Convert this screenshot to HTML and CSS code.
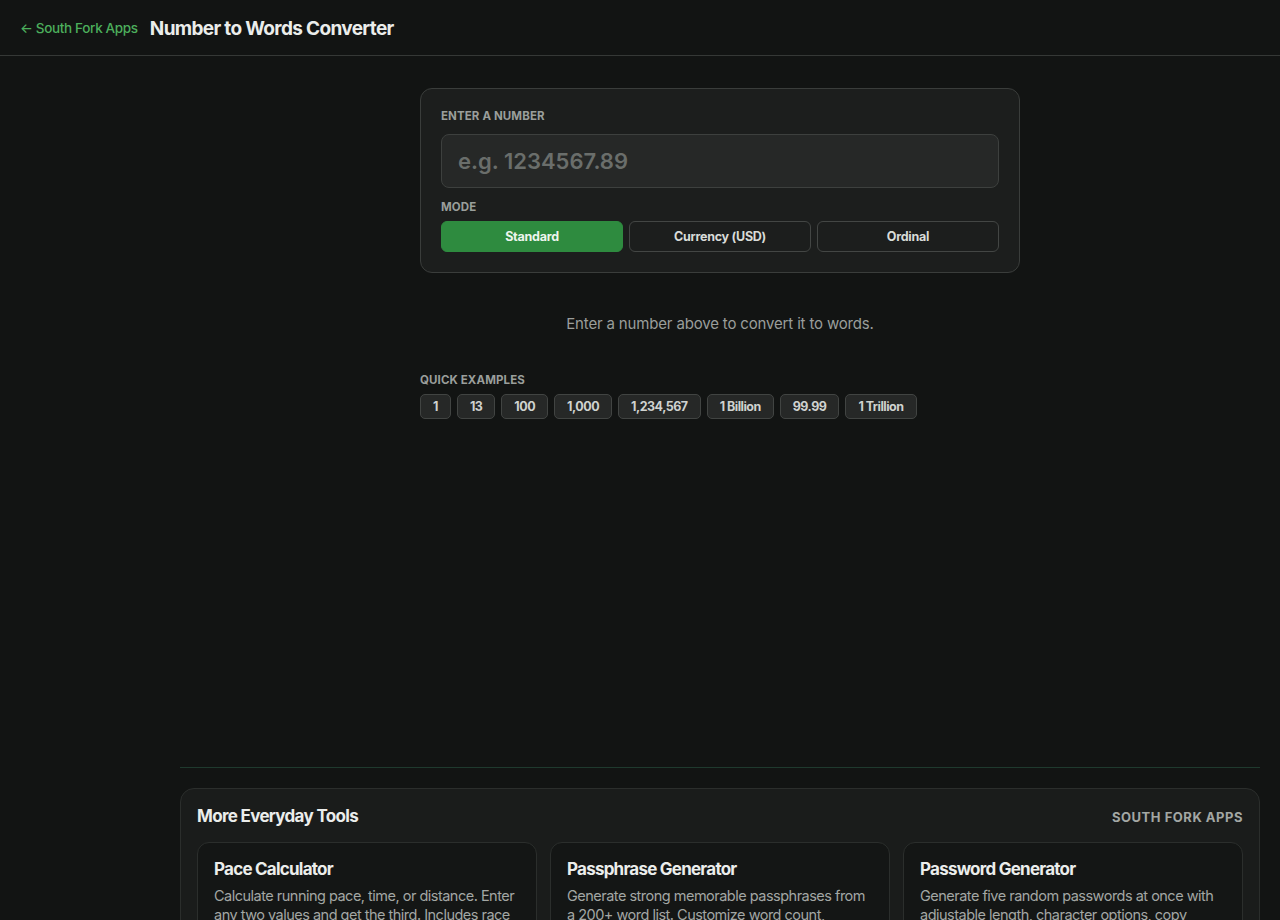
FILE: index.html
```html
<!DOCTYPE html>
<html lang="en">
<head>
    <meta charset="utf-8">
    <title>Number to Words Converter</title>
    <link rel="stylesheet" href="styles.css">
</head>
<body>
<header class="topbar">
    <a class="back" href="#">&larr; South Fork Apps</a>
    <h1 class="title">Number to Words Converter</h1>
</header>
<div class="layout">
    <aside class="side"></aside>
    <main class="main">
        <div class="tool-wrap">
            <section class="tool">
                <div class="panel">
                    <label class="label" for="num">Enter a number</label>
                    <input class="num-input" id="num" type="text" placeholder="e.g. 1234567.89">
                    <div class="label mode-label">Mode</div>
                    <div class="modes">
                        <button class="mode active">Standard</button>
                        <button class="mode">Currency (USD)</button>
                        <button class="mode">Ordinal</button>
                    </div>
                </div>
                <p class="hint">Enter a number above to convert it to words.</p>
                <div class="label">Quick examples</div>
                <div class="chips">
                    <button class="chip">1</button>
                    <button class="chip">13</button>
                    <button class="chip">100</button>
                    <button class="chip">1,000</button>
                    <button class="chip">1,234,567</button>
                    <button class="chip">1 Billion</button>
                    <button class="chip">99.99</button>
                    <button class="chip">1 Trillion</button>
                </div>
            </section>
        </div>
        <footer class="more">
            <div class="more-box">
                <div class="more-head">
                    <h2>More Everyday Tools</h2>
                    <span class="brand">South Fork Apps</span>
                </div>
                <div class="cards">
                    <a class="card" href="#">
                        <h3>Pace Calculator</h3>
                        <p>Calculate running pace, time, or distance. Enter any two values and get the third. Includes race presets.</p>
                    </a>
                    <a class="card" href="#">
                        <h3>Passphrase Generator</h3>
                        <p>Generate strong memorable passphrases from a 200+ word list. Customize word count, separators and more.</p>
                    </a>
                    <a class="card" href="#">
                        <h3>Password Generator</h3>
                        <p>Generate five random passwords at once with adjustable length, character options, copy buttons and more.</p>
                    </a>
                </div>
            </div>
        </footer>
    </main>
</div>
</body>
</html>
```

FILE: styles.css
```css
* {
    box-sizing: border-box;
}
body {
    margin: 0;
    background: #121413;
    color: #e6e8e6;
    font-family: Inter, "Noto Sans", sans-serif;
    letter-spacing: -0.01em;
}
.topbar {
    height: 56px;
    display: flex;
    align-items: center;
    gap: 12px;
    padding: 0 20px 0 20px;
    border-bottom: 1px solid #353836;
}
.back {
    color: #4caf5c;
    font-size: 13.5px;
    font-weight: 500;
    letter-spacing: -0.025em;
    text-decoration: none;
    margin-top: 1px;
}
.title {
    margin: 1px 0 0;
    font-size: 19px;
    font-weight: 700;
    letter-spacing: -0.035em;
    color: #ebedeb;
}
.layout {
    display: flex;
}
.side {
    width: 180px;
    flex-shrink: 0;
}
.main {
    flex: 1;
    padding-right: 20px;
}
.tool-wrap {
    min-height: 711px;
    padding-top: 32px;
}
.tool {
    width: 600px;
    margin: 0 auto;
}
.panel {
    background: #1c1e1d;
    border: 1px solid #3a3d3b;
    border-radius: 12px;
    padding: 20px;
}
.label {
    display: block;
    font-size: 11.5px;
    line-height: 14px;
    font-weight: 700;
    text-transform: uppercase;
    letter-spacing: 0.01em;
    color: #9a9e9b;
}
.num-input {
    display: block;
    width: 100%;
    height: 54px;
    margin-top: 11px;
    padding: 0 16px;
    background: #262827;
    border: 1px solid #3d403e;
    border-radius: 8px;
    color: #e6e8e6;
    font-family: inherit;
    font-size: 22px;
    font-weight: 600;
    outline: none;
}
.num-input::placeholder {
    color: #6a6e6b;
}
.mode-label {
    margin-top: 12px;
}
.modes {
    display: grid;
    grid-template-columns: 1fr 1fr 1fr;
    gap: 6px;
    margin-top: 7px;
}
.mode {
    height: 31px;
    background: transparent;
    border: 1px solid #434644;
    border-radius: 6px;
    color: #d8dbd8;
    font-family: inherit;
    font-size: 12.5px;
    font-weight: 700;
    letter-spacing: -0.02em;
}
.mode.active {
    background: #2e8b3f;
    border-color: #2e8b3f;
    color: #eef5ee;
}
.hint {
    margin: 40px 0 38px;
    text-align: center;
    font-size: 15px;
    line-height: 22px;
    color: #9a9e9b;
}
.chips {
    display: flex;
    gap: 6px;
    margin-top: 7px;
}
.chip {
    height: 25px;
    padding: 0 12px;
    background: #262827;
    border: 1px solid #414442;
    border-radius: 5px;
    color: #cfd2cf;
    font-family: inherit;
    font-size: 12.5px;
    font-weight: 700;
    letter-spacing: -0.04em;
}
.more {
    border-top: 1px solid #1f3a2e;
    padding-top: 20px;
}
.more-box {
    background: #1a1c1b;
    border: 1px solid #2b2e2c;
    border-radius: 14px;
    padding: 16px;
}
.more-head {
    display: flex;
    justify-content: space-between;
    align-items: center;
}
.more-head h2 {
    margin: 0;
    font-size: 17px;
    line-height: 22px;
    font-weight: 700;
    letter-spacing: -0.04em;
    color: #ebedeb;
}
.brand {
    font-size: 13px;
    font-weight: 700;
    text-transform: uppercase;
    letter-spacing: 0.04em;
    color: #a3a7a4;
    margin-top: 2px;
}
.cards {
    display: grid;
    grid-template-columns: 1fr 1fr 1fr;
    gap: 13px;
    margin-top: 15px;
}
.card {
    display: block;
    background: #141615;
    border: 1px solid #2b2e2c;
    border-radius: 12px;
    padding: 16px;
    text-decoration: none;
    height: 120px;
}
.card h3 {
    margin: 0;
    font-size: 17px;
    line-height: 20px;
    font-weight: 700;
    letter-spacing: -0.045em;
    color: #ebedeb;
}
.card p {
    margin: 7px 0 0;
    font-size: 14.5px;
    line-height: 19px;
    letter-spacing: -0.035em;
    color: #a3a7a4;
}
```
